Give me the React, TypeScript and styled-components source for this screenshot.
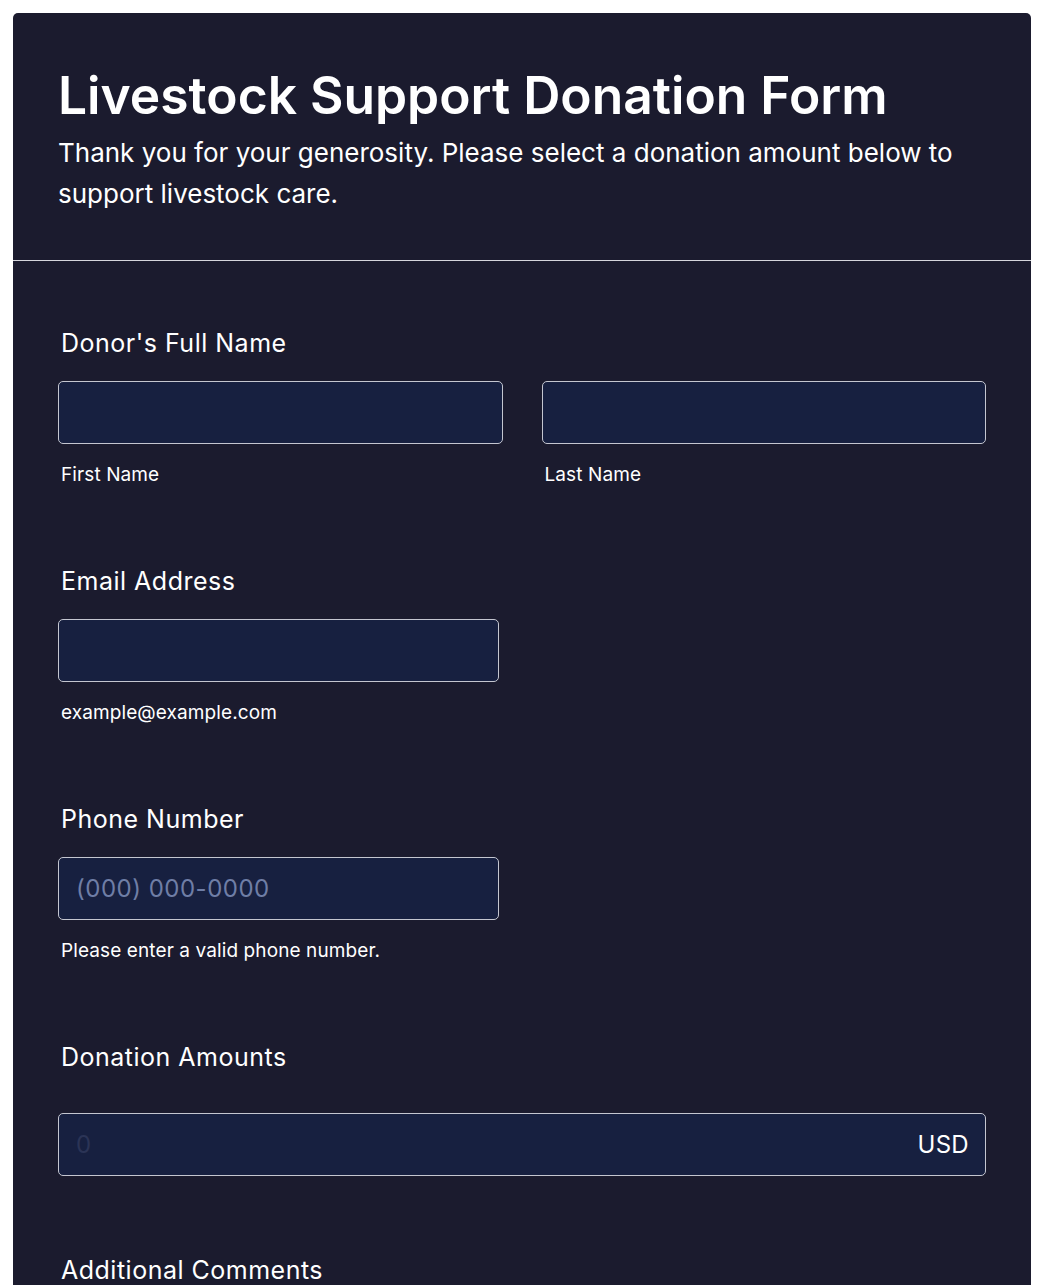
import React, { FC } from 'react';
import styled, { createGlobalStyle } from 'styled-components';

const GlobalStyle = createGlobalStyle`
  body {
    margin: 0;
    background: #ffffff;
    font-family: Inter, 'Noto Sans', sans-serif;
  }
`;

const Page = styled.div`
  padding: 13px 13px 0 13px;
`;

const Card = styled.div`
  background: #1b1b2e;
  border-radius: 5px 5px 0 0;
  color: #ffffff;
  min-height: 1272px;
`;

const Header = styled.header`
  padding: 53px 45px 46px 45px;
  border-bottom: 1px solid #d6d6dc;
`;

const Title = styled.h1`
  margin: 0;
  font-size: 51.5px;
  line-height: 58px;
  font-weight: 600;
`;

const Subtitle = styled.p`
  margin: 8px 0 0 0;
  max-width: 940px;
  font-size: 26px;
  line-height: 41px;
  font-weight: 400;
`;

const Body = styled.div`
  padding: 67px 45px 0 45px;
  display: flex;
  flex-direction: column;
  gap: 79px;
`;

const Field = styled.section`
  display: flex;
  flex-direction: column;
`;

const Label = styled.label<{ $gap?: number }>`
  display: block;
  padding-left: 3px;
  font-size: 25px;
  line-height: 31px;
  font-weight: 400;
  letter-spacing: 0.5px;
  margin-bottom: ${(p) => p.$gap ?? 22}px;
`;

const Row = styled.div`
  display: grid;
  grid-template-columns: 1fr 1fr;
  gap: 39px;
`;

const Half = styled.div<{ $width?: number }>`
  display: flex;
  flex-direction: column;
  width: ${(p) => (p.$width ? `${p.$width}px` : 'auto')};
`;

const InputBox = styled.div`
  box-sizing: border-box;
  height: 63px;
  background: #172040;
  border: 1px solid #c4c6d0;
  border-radius: 5px;
  display: flex;
  align-items: center;
  padding: 0 16px 0 17px;
`;

const Input = styled.input`
  flex: 1;
  min-width: 0;
  padding: 0;
  background: transparent;
  border: none;
  outline: none;
  color: #ffffff;
  font-family: Inter, 'Noto Sans', sans-serif;
  font-size: 24px;
  letter-spacing: 0.5px;
  &::placeholder {
    color: #6f7ea6;
  }
`;

const AmountInput = styled(Input)`
  &::placeholder {
    color: #2b3456;
  }
`;

const Currency = styled.span`
  font-size: 24px;
  letter-spacing: 0.3px;
  color: #ffffff;
`;

const SubLabel = styled.span`
  display: block;
  padding-left: 3px;
  margin-top: 19px;
  font-size: 19px;
  line-height: 24px;
  letter-spacing: 0.1px;
`;

const App: FC = () => (
  <>
    <GlobalStyle />
    <Page>
      <Card>
        <Header>
          <Title>Livestock Support Donation Form</Title>
          <Subtitle>
            Thank you for your generosity. Please select a donation amount below to
            support livestock care.
          </Subtitle>
        </Header>
        <Body>
          <Field>
            <Label>Donor's Full Name</Label>
            <Row>
              <Half>
                <InputBox>
                  <Input type="text" />
                </InputBox>
                <SubLabel>First Name</SubLabel>
              </Half>
              <Half>
                <InputBox>
                  <Input type="text" />
                </InputBox>
                <SubLabel>Last Name</SubLabel>
              </Half>
            </Row>
          </Field>
          <Field>
            <Label>Email Address</Label>
            <Half $width={441}>
              <InputBox>
                <Input type="email" />
              </InputBox>
              <SubLabel>example@example.com</SubLabel>
            </Half>
          </Field>
          <Field>
            <Label>Phone Number</Label>
            <Half $width={441}>
              <InputBox>
                <Input type="tel" placeholder="(000) 000-0000" />
              </InputBox>
              <SubLabel>Please enter a valid phone number.</SubLabel>
            </Half>
          </Field>
          <Field>
            <Label $gap={40}>Donation Amounts</Label>
            <InputBox>
              <AmountInput type="text" placeholder="0" />
              <Currency>USD</Currency>
            </InputBox>
          </Field>
          <Field>
            <Label>Additional Comments</Label>
          </Field>
        </Body>
      </Card>
    </Page>
  </>
);

export default App;
